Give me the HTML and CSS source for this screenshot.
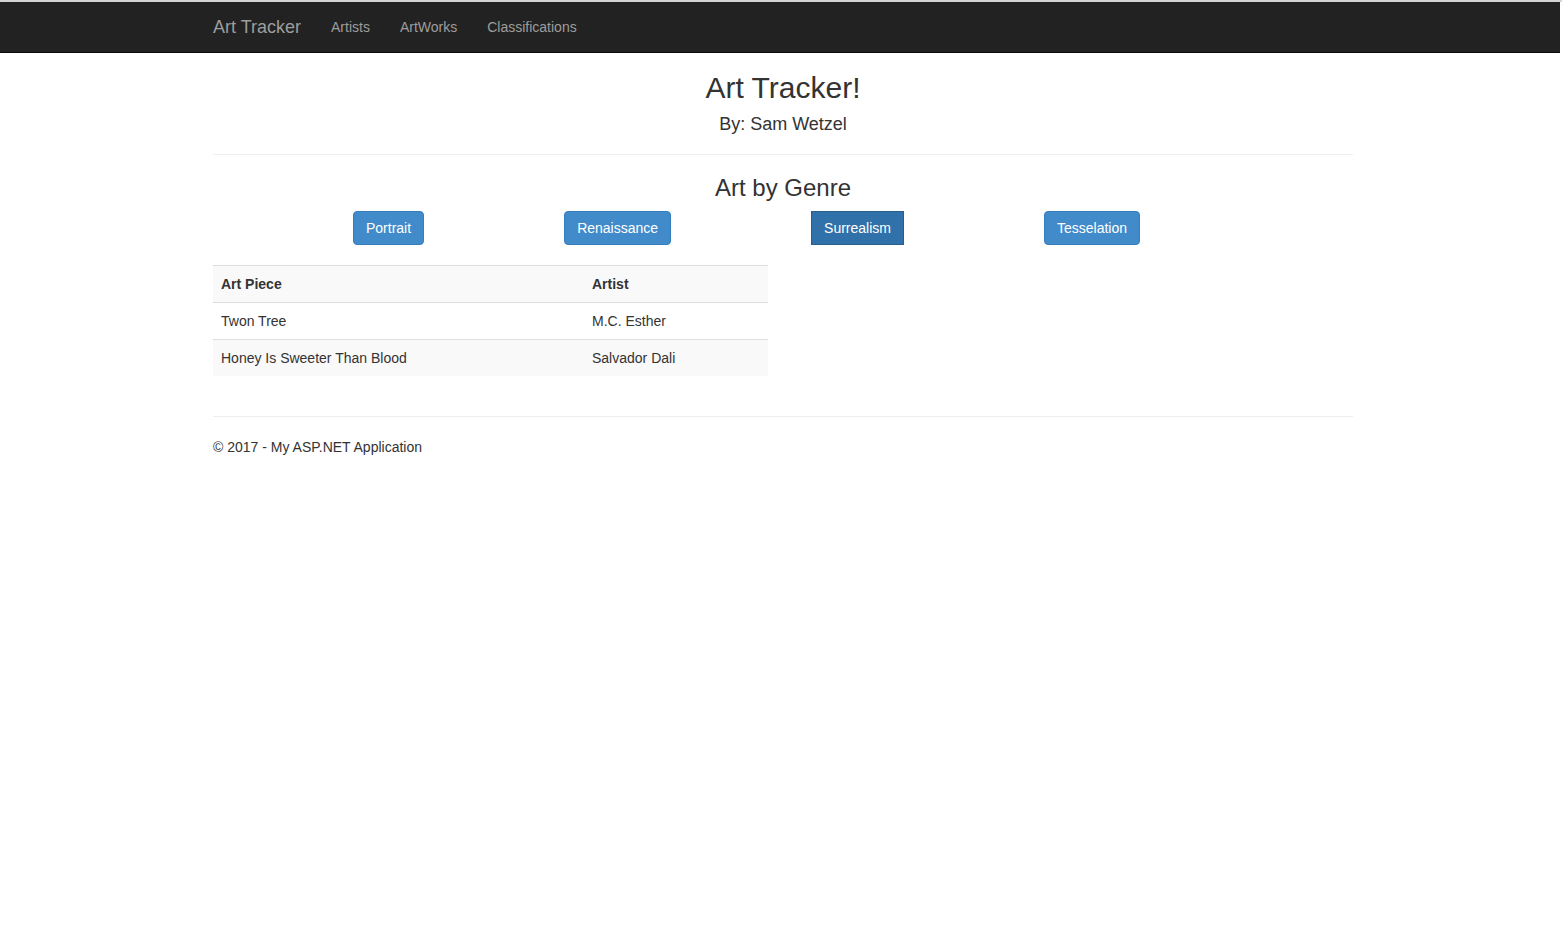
FILE: index.html
```html
<!DOCTYPE html>
<html>
<head>
<meta charset="utf-8">
<title>Art Tracker</title>
<link rel="stylesheet" href="styles.css">
</head>
<body>
<div class="topline"></div>
<nav class="navbar">
  <div class="container nav-inner">
    <a class="brand" href="#">Art Tracker</a>
    <ul class="nav-links">
      <li><a href="#">Artists</a></li>
      <li><a href="#">ArtWorks</a></li>
      <li><a href="#">Classifications</a></li>
    </ul>
  </div>
</nav>
<main class="container body-content">
  <header class="title">
    <h2 class="main-title">Art Tracker!</h2>
    <h4 class="byline">By: Sam Wetzel</h4>
  </header>
  <hr class="rule">
  <h3 class="section-title">Art by Genre</h3>
  <div class="genres">
    <button class="btn">Portrait</button>
    <button class="btn">Renaissance</button>
    <button class="btn btn-active">Surrealism</button>
    <button class="btn">Tesselation</button>
  </div>
  <table class="art-table">
    <tr class="striped"><th class="col-piece">Art Piece</th><th>Artist</th></tr>
    <tr><td>Twon Tree</td><td>M.C. Esther</td></tr>
    <tr class="striped"><td>Honey Is Sweeter Than Blood</td><td>Salvador Dali</td></tr>
  </table>
  <hr class="rule footer-rule">
  <footer class="footer">
    <p>&copy; 2017 - My ASP.NET Application</p>
  </footer>
</main>
</body>
</html>
```

FILE: styles.css
```css
html, body {
  margin: 0;
  padding: 0;
}
body {
  font-family: "Liberation Sans", Arial, Helvetica, sans-serif;
  font-size: 14px;
  line-height: 20px;
  color: #333;
  background: #fff;
}
.topline {
  height: 2px;
  background: #d4d4d4;
}
.navbar {
  background: #222;
  border-bottom: 1px solid #080808;
  height: 50px;
  margin-right: 2px;
}
.container {
  width: 1140px;
  margin-left: calc(50% - 568px);
}
.nav-inner {
  display: flex;
  align-items: center;
  height: 50px;
}
.brand {
  color: #9d9d9d;
  font-size: 18px;
  text-decoration: none;
  line-height: 20px;
  margin-left: 1px;
}
.nav-links {
  display: flex;
  list-style: none;
  margin: 0 0 0 30px;
  padding: 0;
}
.nav-links li a {
  display: block;
  color: #9d9d9d;
  text-decoration: none;
  font-size: 14px;
  line-height: 20px;
  margin-right: 30px;
}
.title {
  text-align: center;
  padding-top: 18px;
}
.main-title {
  font-size: 30px;
  font-weight: 500;
  line-height: 33px;
  margin: 0;
}
.byline {
  font-size: 18px;
  font-weight: 500;
  line-height: 20px;
  margin: 10px 0 0 0;
}
.rule {
  border: 0;
  border-top: 1px solid #eee;
  margin: 20px 0 0 0;
}
.section-title {
  text-align: center;
  font-size: 24px;
  font-weight: 500;
  line-height: 26px;
  margin: 20px 0 0 0;
}
.genres {
  display: flex;
  gap: 140px;
  padding-left: 140px;
  margin-top: 10px;
}
.btn {
  font-family: "Liberation Sans", Arial, Helvetica, sans-serif;
  font-size: 14px;
  line-height: 20px;
  padding: 6px 12px;
  color: #fff;
  background: #428bca;
  border: 1px solid #357ebd;
  border-radius: 4px;
  cursor: pointer;
}
.btn-active {
  background: #3071a9;
  border-color: #285e8e;
  border-radius: 0;
}
.art-table {
  width: 555px;
  border-collapse: collapse;
  margin-top: 20px;
}
.art-table th, .art-table td {
  text-align: left;
  padding: 8px;
  line-height: 20px;
  border-top: 1px solid #ddd;
}
.art-table th {
  font-weight: bold;
}
.col-piece {
  width: 355px;
}
.striped {
  background: #f9f9f9;
}
.footer-rule {
  margin-top: 40px;
}
.footer p {
  margin: 20px 0 0 0;
}
```
